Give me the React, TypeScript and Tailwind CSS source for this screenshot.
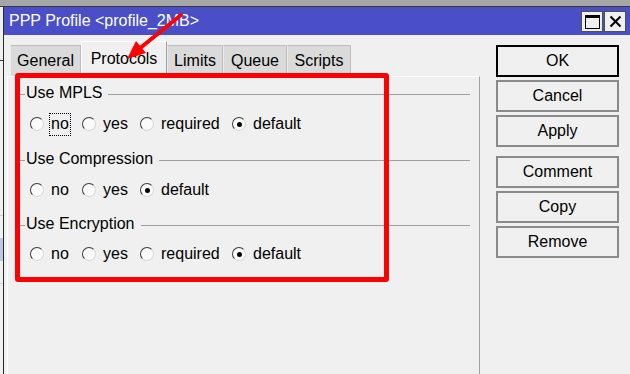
const options4 = ["no", "yes", "required", "default"];
const options3 = ["no", "yes", "default"];

const widths: Record<string, string> = {
  no: "w-[52px]",
  yes: "w-[58px]",
  required: "w-[92px]",
  default: "",
};

function Radio({ checked }: { checked: boolean }) {
  return (
    <span className="w-[14px] h-[14px] shrink-0 rounded-full bg-[#fbfbfb] border border-t-[#3c3c3c] border-l-[#3c3c3c] border-r-[#d8d8d8] border-b-[#d8d8d8] flex items-center justify-center">
      {checked && <span className="w-[5px] h-[5px] rounded-full bg-black" />}
    </span>
  );
}

function RadioRow({ items, focus }: { items: string[]; focus?: string }) {
  return (
    <div className="h-[24px] flex items-center pl-[22px]">
      {items.map((it) => (
        <div key={it} className={`flex items-center ${widths[it]}`}>
          <Radio checked={it === "default"} />
          <span
            className={`ml-[5px] h-[23px] px-[1px] flex items-center border ${
              focus === it ? "border-dotted border-black" : "border-transparent"
            }`}
          >
            {it}
          </span>
        </div>
      ))}
    </div>
  );
}

function GroupLabel({ text }: { text: string }) {
  return (
    <div className="h-[20px] flex items-center">
      <span className="w-[5px] h-px bg-[#a0a0a0] ml-[12px] mt-[2px]" />
      <span className="ml-[1px] leading-none">{text}</span>
      <span className="flex-1 h-px bg-[#a0a0a0] ml-[6px] mr-[9px] mt-[2px]" />
    </div>
  );
}

function Tab({ label, w, active }: { label: string; w: string; active?: boolean }) {
  return active ? (
    <div className={`${w} h-[35px] flex items-center justify-center bg-[#f0f0f0] border-t border-l border-white border-r border-r-[#a0a0a0] pb-[1px]`}>
      {label}
    </div>
  ) : (
    <div className={`${w} h-[31px] flex items-center justify-center bg-[#dadada] border-t border-r border-[#bdbdbd] border-l border-l-[#ececec]`}>
      {label}
    </div>
  );
}

function Btn({ label, ok }: { label: string; ok?: boolean }) {
  return (
    <div
      className={`h-[32px] flex items-center justify-center bg-[#f0f0f0] border-2 ${
        ok ? "border-black" : "border-[#8a8a8a]"
      }`}
    >
      {label}
    </div>
  );
}

export default function App() {
  return (
    <div className="relative w-[630px] h-[374px] overflow-hidden bg-[#f0f0f0] font-['Liberation_Sans',Arial,sans-serif] text-[16px] text-black">
      <div className="h-[7px] bg-[#a6a6a6] border-b border-[#3a3a3a]" />
      <div className="flex h-[367px]">
        {/* edge of the window behind */}
        <div className="w-[3px] flex flex-col bg-[#f0f0f0]">
          <div className="h-[53px]" />
          <div className="h-px bg-[#3a3a3a]" />
          <div className="h-[154px]" />
          <div className="h-px bg-[#cfcfcf]" />
          <div className="h-[22px]" />
          <div className="h-[23px] bg-[#b8cbe3]" />
          <div className="h-[22px]" />
          <div className="h-px bg-[#cfcfcf]" />
        </div>

        <div className="flex-1 flex flex-col border-l border-[#2a2a2a]">
          <div className="h-[28px] flex items-center bg-[#4b4fc7] pl-[5px] pr-[4px] text-white">
            <span className="flex-1">PPP Profile &lt;profile_2MB&gt;</span>
            <div className="flex gap-[1px] mt-[1px]">
              <div className="w-[22px] h-[21px] bg-[#f0f0f0] border border-[#505050] flex items-center justify-center">
                <svg width="15" height="14" viewBox="0 0 15 14">
                  <rect x="0.5" y="0.5" width="14" height="13" fill="none" stroke="#000" />
                  <rect x="0" y="0" width="15" height="3" fill="#000" />
                </svg>
              </div>
              <div className="w-[22px] h-[21px] bg-[#f0f0f0] border border-[#505050] flex items-center justify-center">
                <svg width="13" height="13" viewBox="0 0 13 13">
                  <path d="M1.5 1.5 L11.5 11.5 M11.5 1.5 L1.5 11.5" stroke="#000" strokeWidth="2" />
                </svg>
              </div>
            </div>
          </div>

          <div className="flex flex-1 min-h-0">
            <div className="ml-[3px] w-[473px] flex flex-col pt-[3px]">
              <div className="h-[38px] flex items-end pl-[3px]">
                <Tab label="General" w="w-[71px]" />
                <Tab label="Protocols" w="w-[86px]" active />
                <Tab label="Limits" w="w-[56px]" />
                <Tab label="Queue" w="w-[64px]" />
                <Tab label="Scripts" w="w-[64px]" />
              </div>
              <div className="flex-1 flex flex-col border-t border-l border-white border-r border-r-[#a0a0a0] bg-[#f0f0f0]">
                <div className="mt-[6px]">
                  <GroupLabel text="Use MPLS" />
                </div>
                <div className="mt-[9px]">
                  <RadioRow items={options4} focus="no" />
                </div>
                <div className="mt-[13px]">
                  <GroupLabel text="Use Compression" />
                </div>
                <div className="mt-[9px]">
                  <RadioRow items={options3} />
                </div>
                <div className="mt-[12px]">
                  <GroupLabel text="Use Encryption" />
                </div>
                <div className="mt-[8px]">
                  <RadioRow items={options4} />
                </div>
              </div>
            </div>

            <div className="ml-[16px] w-[123px] flex flex-col pt-[10px] gap-[3px]">
              <Btn label="OK" ok />
              <Btn label="Cancel" />
              <Btn label="Apply" />
              <div className="mt-[6px]">
                <Btn label="Comment" />
              </div>
              <Btn label="Copy" />
              <Btn label="Remove" />
            </div>
          </div>
        </div>
      </div>

      {/* annotation overlay */}
      <div className="absolute left-[15px] top-[73px] w-[374px] h-[209px] border-[5px] border-[#ff0000] rounded-[3px] pointer-events-none" />
      <svg className="absolute left-0 top-0 pointer-events-none" width="630" height="374">
        <line x1="181" y1="15" x2="139" y2="49" stroke="#ff0000" strokeWidth="4" strokeLinecap="round" />
        <polygon points="127,59 146,53 136,41" fill="#ff0000" />
      </svg>
    </div>
  );
}
